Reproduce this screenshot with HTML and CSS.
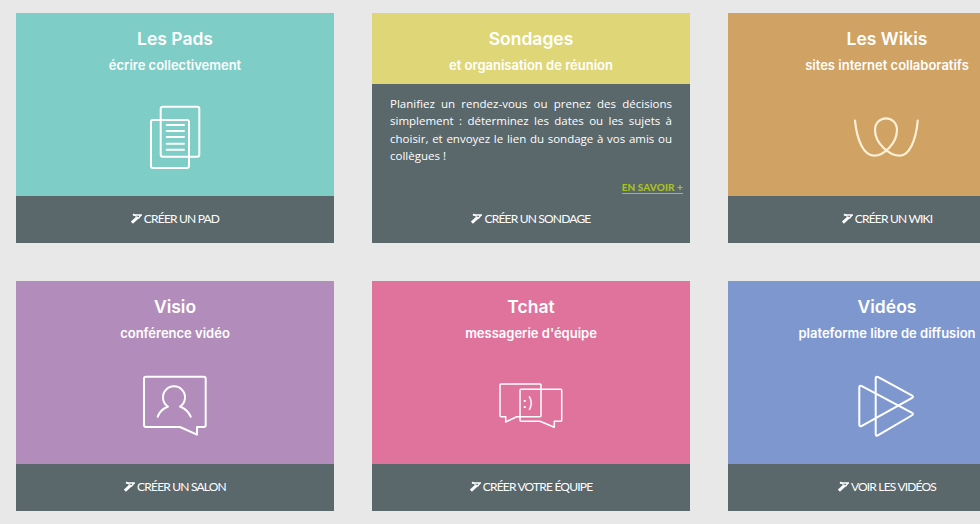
FILE: index.html
```html
<!DOCTYPE html>
<html lang="fr">
<head>
<meta charset="utf-8">
<title>Services</title>
<link rel="stylesheet" href="styles.css">
</head>
<body>
<svg class="defs" width="0" height="0" aria-hidden="true"><defs>
<symbol id="wand" viewBox="0 0 12 12"><path d="M1 10.500 7.500 4.500" stroke="#fff" stroke-width="3.200" fill="none"/><path d="M2 2.200H12M11 2 8 6" stroke="#fff" stroke-width="1.500" fill="none"/><path d="M2.500 1 5.500 3.500" stroke="#fff" stroke-width="1.200"/></symbol>
</defs></svg>
<main class="grid">
  <article class="card pads">
    <header class="head">
      <h2 class="title">Les Pads</h2>
      <p class="sub">écrire collectivement</p>
      <svg class="icon" viewBox="0 0 80 70"><rect x="25.700" y="3.700" width="38.600" height="50" rx="2"/><rect x="16" y="17" width="38" height="48" rx="2"/><path d="M31.700 22H49M31.700 28H49M31.700 34H49M31.700 40.700H49M31.700 46.700H49"/></svg>
    </header>
    <a class="foot"><svg class="wand"><use href="#wand"/></svg>CRÉER UN PAD</a>
  </article>

  <article class="card sondages">
    <header class="head short">
      <h2 class="title">Sondages</h2>
      <p class="sub">et organisation de réunion</p>
    </header>
    <div class="panel">
      <p class="desc">Planifiez un rendez-vous ou prenez des décisions simplement : déterminez les dates ou les sujets à choisir, et envoyez le lien du sondage à vos amis ou collègues !</p>
      <a class="more">EN SAVOIR +</a>
    </div>
    <a class="foot"><svg class="wand"><use href="#wand"/></svg>CRÉER UN SONDAGE</a>
  </article>

  <article class="card wikis">
    <header class="head">
      <h2 class="title">Les Wikis</h2>
      <p class="sub">sites internet collaboratifs</p>
      <svg class="icon cream" viewBox="0 0 80 70"><path d="M8 17.700C10 38 17 52.700 27 52.700C37 52.700 50 40 50 27C50 20 45 15.300 39 15.300C33 15.300 28 20 28 27C28 40 42 52.700 53 52.700C62 52.700 69 38 70.700 17.700"/></svg>
    </header>
    <a class="foot"><svg class="wand"><use href="#wand"/></svg>CRÉER UN WIKI</a>
  </article>

  <article class="card visio">
    <header class="head">
      <h2 class="title">Visio</h2>
      <p class="sub">conférence vidéo</p>
      <svg class="icon" viewBox="0 0 80 70"><path d="M11 5.700H68.700Q70.700 5.700 70.700 7.700V54Q70.700 56 68.700 56H62V63.700L45 56H11Q9 56 9 54V7.700Q9 5.700 11 5.700Z"/><path d="M33 35.500A11 11 0 1 1 45 35.500M22.700 45.700Q25 39 33 35.500M55.700 45.700Q53 39 45 35.500"/></svg>
    </header>
    <a class="foot"><svg class="wand"><use href="#wand"/></svg>CRÉER UN SALON</a>
  </article>

  <article class="card tchat">
    <header class="head">
      <h2 class="title">Tchat</h2>
      <p class="sub">messagerie d'équipe</p>
      <svg class="icon thin" viewBox="0 0 80 70"><path d="M10 13H49Q50 13 50 14V44.700Q50 45.700 49 45.700H25.700L14.700 51V45.700H10Q9 45.700 9 44.700V14Q9 13 10 13Z"/><path d="M30 18.300H69.700Q70.700 18.300 70.700 19.300V49.300Q70.700 50.300 69.700 50.300H63.300V56.300L49 50.300H30Q29 50.300 29 49.300V19.300Q29 18.300 30 18.300Z"/><text class="smile" x="37.500" y="37" text-anchor="middle">:)</text></svg>
    </header>
    <a class="foot"><svg class="wand"><use href="#wand"/></svg>CRÉER VOTRE ÉQUIPE</a>
  </article>

  <article class="card videos">
    <header class="head">
      <h2 class="title">Vidéos</h2>
      <p class="sub">plateforme libre de diffusion</p>
      <svg class="icon" viewBox="0 0 80 70"><path d="M14.900 15.100L64.600 41.600Q67.300 43 64.700 44.500L31.300 64.200Q28.700 65.700 28.700 62.700L28.700 7.700Q28.700 4.700 31.300 6.100L64.700 24.300Q67.300 25.700 64.700 27.200L14.900 54.800Q12.300 56.300 12.300 53.300L12.300 16.700Q12.300 13.700 14.900 15.100Z"/></svg>
    </header>
    <a class="foot"><svg class="wand"><use href="#wand"/></svg>VOIR LES VIDÉOS</a>
  </article>
</main>
</body>
</html>
```
FILE: styles.css
```css
html, body {
  margin: 0;
  height: 100%;
  overflow: hidden;
  background: #e8e8e9;
}
.defs { position: absolute; }
.grid {
  display: grid;
  grid-template-columns: repeat(3, 318px);
  grid-auto-rows: 230px;
  gap: 38px;
  padding: 13px 0 0 16px;
  width: 1100px;
  font-family: Lato, "Liberation Sans", sans-serif;
  color: #fff;
}
.card {
  display: flex;
  flex-direction: column;
  background: #5a676b;
}
.head {
  flex: 1;
  padding-top: 15px;
  text-align: center;
  box-sizing: border-box;
}
.head.short { flex: 0 0 71px; }
.title {
  margin: 0;
  font-family: Inter, sans-serif;
  font-size: 17.500px;
  line-height: 22px;
  font-weight: 600;
}
.sub {
  margin: 6px 0 0;
  font-family: Inter, sans-serif;
  font-size: 13px;
  line-height: 18px;
  font-weight: 600;
}
.icon {
  display: block;
  width: 80px;
  height: 70px;
  margin: 29px auto 0;
  fill: none;
  stroke: #fff;
  stroke-width: 2;
  stroke-linejoin: round;
  stroke-linecap: round;
}
.icon.thin { stroke-width: 1.500; }
.icon.cream { stroke: #fbf0d8; stroke-width: 2.200; }
.smile {
  font-family: Lato, sans-serif;
  font-size: 16px;
  letter-spacing: 1.500px;
  fill: #fff;
  stroke: none;
}
.pads .head { background: #7ecdc6; }
.sondages .head { background: #dfd777; }
.wikis .head { background: #d0a263; }
.visio .head { background: #b28dbb; }
.tchat .head { background: #e0739c; }
.videos .head { background: #7e98cf; }
.panel {
  flex: 1;
  display: flex;
  flex-direction: column;
  padding: 11px 7px 0 18px;
}
.desc {
  margin: 0 11px 0 0;
  font-family: "Open Sans", sans-serif;
  font-size: 11.500px;
  line-height: 17.300px;
  text-align: justify;
}
.more {
  align-self: flex-end;
  margin-top: 17px;
  font-size: 10px;
  line-height: 12px;
  font-weight: 900;
  letter-spacing: 0.100px;
  color: #a9c21f;
  border-bottom: 1px solid #a9c21f;
}
.foot {
  flex: 0 0 47px;
  display: flex;
  align-items: center;
  justify-content: center;
  gap: 2px;
  padding-bottom: 2px;
  box-sizing: border-box;
  font-size: 12px;
  letter-spacing: -0.800px;
  color: #fff;
}
.wand {
  width: 11px;
  height: 11px;
}
```
